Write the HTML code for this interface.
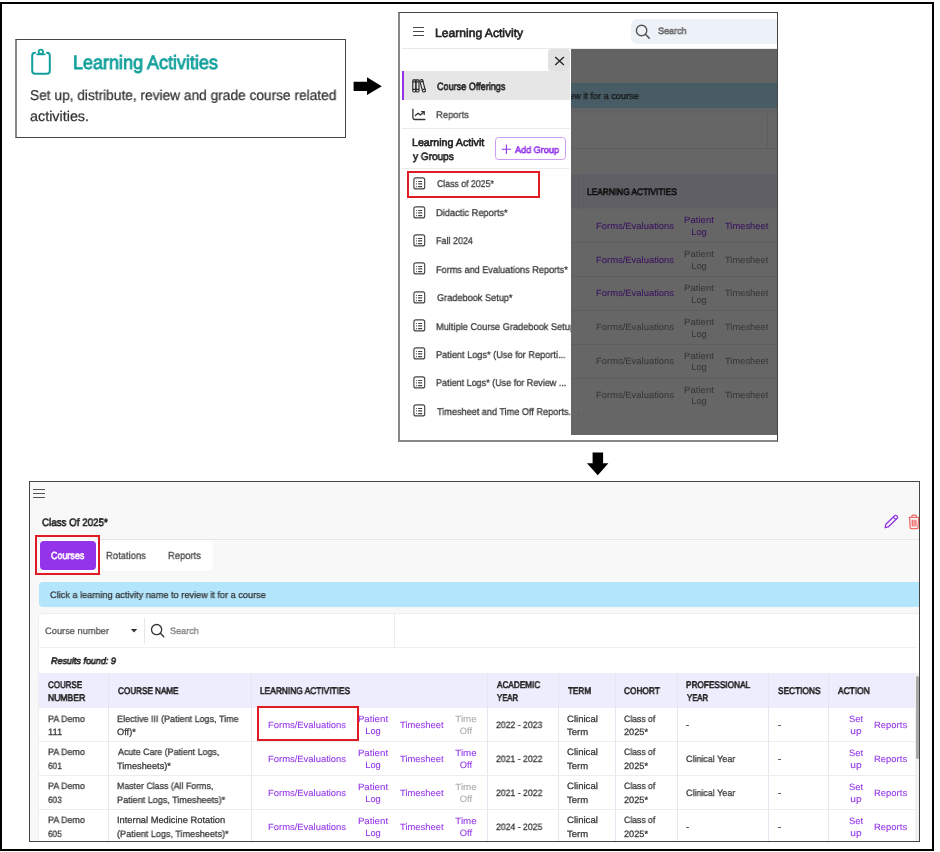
<!DOCTYPE html>
<html><head><meta charset="utf-8"><style>
html,body{margin:0;padding:0;background:#fff;}
body{width:940px;height:852px;position:relative;overflow:hidden;font-family:"Liberation Sans", sans-serif;text-rendering:geometricPrecision;}
.a{position:absolute;}
.t{position:absolute;white-space:nowrap;display:inline-block;-webkit-text-stroke:0.25px currentColor;}
.b{-webkit-text-stroke:0;}
.t{will-change:transform;}
svg.a{overflow:visible;}
</style></head><body>
<div class="a" style="left:0px;top:2px;width:934px;height:849px;border:2px solid #000;box-sizing:border-box;"></div><div class="a" style="left:15px;top:39px;width:331px;height:99px;border:1px solid #454545;border-left:2px solid #878787;box-sizing:border-box;"></div><svg class="a" style="left:30px;top:47px" width="22" height="28" viewBox="0 0 22 28">
<path d="M5 5.8 C3 5.8 2.2 7 2.2 8.8 V23.8 C2.2 25.8 3.2 26.8 5.2 26.8 H16.8 C18.8 26.8 19.8 25.8 19.8 23.8 V8.8 C19.8 7 19 5.8 17 5.8" fill="none" stroke="#11a09c" stroke-width="2" stroke-linecap="round"/>
<circle cx="10.8" cy="4.8" r="2.2" fill="none" stroke="#11a09c" stroke-width="1.8"/>
<rect x="6.2" y="6.4" width="9.4" height="1.8" rx="0.9" fill="#11a09c"/>
</svg><span id="t0" class="t" style="left:72.64px;top:52.00px;font-size:19.4px;line-height:23px;color:#11a09c;-webkit-text-stroke:0.78px currentColor;transform:scaleX(0.9275);transform-origin:0 0;">Learning Activities</span><span id="t1" class="t" style="left:29.90px;top:88.00px;font-size:14.2px;line-height:17px;color:#333;transform:scaleX(0.9662);transform-origin:0 0;">Set up, distribute, review and grade course related</span><span id="t2" class="t" style="left:30.47px;top:109.00px;font-size:14.2px;line-height:17px;color:#333;transform:scaleX(1.0118);transform-origin:0 0;">activities.</span><svg class="a" style="left:353px;top:76px" width="30" height="20" viewBox="0 0 30 20"><path d="M0.6 5.7 H14 V1.3 L28.8 10.3 L14 19 V15.1 H0.6 Z" fill="#000"/></svg><svg class="a" style="left:586px;top:451px" width="24" height="26" viewBox="0 0 24 26"><path d="M6.6 1.6 H17.1 V12.3 H22.4 L11.8 24.3 L0.9 12.3 H6.6 Z" fill="#000"/></svg><div class="a" style="left:398px;top:12px;width:380px;height:430px;border:1px solid #454545;border-left:2px solid #878787;border-bottom:2px solid #878787;box-sizing:border-box;background:#fff;"></div><div class="a" style="left:402px;top:48px;width:375px;height:1px;background:#e9e9e9;"></div><div class="a" style="left:413px;top:26.650000000000002px;width:11px;height:1.2999999999999972px;background:#4a4a4a;"></div><div class="a" style="left:413px;top:30.650000000000002px;width:11px;height:1.2999999999999972px;background:#4a4a4a;"></div><div class="a" style="left:413px;top:34.550000000000004px;width:11px;height:1.2999999999999972px;background:#4a4a4a;"></div><span id="t3" class="t" style="left:435.31px;top:26.00px;font-size:12.0px;line-height:14px;color:#222;-webkit-text-stroke:0.60px currentColor;transform:scaleX(1.0090);transform-origin:0 0;">Learning Activity</span><div class="a" style="left:631px;top:19px;width:146px;height:25px;background:#edf1f8;border-radius:6px 0 0 6px;"></div><svg class="a" style="left:634px;top:23px" width="18" height="18" viewBox="0 0 18 18"><circle cx="7.6" cy="7.5" r="5.2" fill="none" stroke="#555" stroke-width="1.4"/><path d="M11.4 11.3 L15.2 15.1" stroke="#555" stroke-width="1.5" stroke-linecap="round"/></svg><span id="t4" class="t" style="left:657.73px;top:26.00px;font-size:9.3px;line-height:11px;color:#6b6b6b;-webkit-text-stroke:0.60px currentColor;transform:scaleX(0.9712);transform-origin:0 0;">Search</span><div class="a" style="left:0;top:0;width:940px;height:852px;clip-path:inset(49px 163px 417px 571px);"><div class="a" style="left:571px;top:49px;width:206px;height:386px;background:#f8f8f8;"></div><div class="a" style="left:571px;top:83px;width:206px;height:25px;background:#b3e5fc;"></div><span id="t5" class="t" style="left:422.63px;top:91.00px;font-size:9.3px;line-height:11px;color:#333;transform:scaleX(0.9847);transform-origin:0 0;">Click a learning activity name to review it for a course</span><div class="a" style="left:420px;top:113px;width:357px;height:36px;background:#fff;border-bottom:1px solid #ececec;box-sizing:border-box;"></div><div class="a" style="left:767px;top:114px;width:1px;height:34px;background:#ececec;"></div><div class="a" style="left:420px;top:149px;width:357px;height:25px;background:#fff;"></div><div class="a" style="left:420px;top:174px;width:357px;height:34px;background:#ededfd;"></div><div class="a" style="left:578px;top:174px;width:1px;height:244px;background:#e4e4ef;"></div><span id="t6" class="t" style="left:587.37px;top:186.00px;font-size:9.4px;line-height:11px;color:#222;-webkit-text-stroke:0.60px currentColor;transform:scaleX(0.8893);transform-origin:0 0;">LEARNING ACTIVITIES</span><div class="a" style="left:420px;top:209.1px;width:357px;height:33.95000000000002px;background:#fff;border-bottom:1px solid #ececec;box-sizing:border-box;"></div><span id="t7" class="t" style="left:595.54px;top:221.00px;font-size:9.2px;line-height:11px;color:#9333ea;-webkit-text-stroke:0.08px currentColor;transform:scaleX(1.0259);transform-origin:0 0;">Forms/Evaluations</span><span id="t8" class="t" style="left:699.20px;top:215.00px;font-size:9.2px;line-height:11px;color:#9333ea;-webkit-text-stroke:0.08px currentColor;transform:translateX(-50%) scaleX(1.0457);transform-origin:center;">Patient</span><span id="t9" class="t" style="left:699.20px;top:227.00px;font-size:9.2px;line-height:11px;color:#9333ea;-webkit-text-stroke:0.08px currentColor;transform:translateX(-50%) scaleX(1.0154);transform-origin:center;">Log</span><span id="t10" class="t" style="left:725.24px;top:221.00px;font-size:9.2px;line-height:11px;color:#9333ea;-webkit-text-stroke:0.08px currentColor;transform:scaleX(1.0180);transform-origin:0 0;">Timesheet</span><div class="a" style="left:420px;top:243.04999999999998px;width:357px;height:33.95000000000002px;background:#fff;border-bottom:1px solid #ececec;box-sizing:border-box;"></div><span id="t11" class="t" style="left:595.54px;top:255.00px;font-size:9.2px;line-height:11px;color:#9333ea;-webkit-text-stroke:0.08px currentColor;transform:scaleX(1.0259);transform-origin:0 0;">Forms/Evaluations</span><span id="t12" class="t" style="left:699.20px;top:249.00px;font-size:9.2px;line-height:11px;color:#8c8c8c;-webkit-text-stroke:0.08px currentColor;transform:translateX(-50%) scaleX(1.0457);transform-origin:center;">Patient</span><span id="t13" class="t" style="left:699.20px;top:261.00px;font-size:9.2px;line-height:11px;color:#8c8c8c;-webkit-text-stroke:0.08px currentColor;transform:translateX(-50%) scaleX(1.0154);transform-origin:center;">Log</span><span id="t14" class="t" style="left:725.24px;top:255.00px;font-size:9.2px;line-height:11px;color:#8c8c8c;-webkit-text-stroke:0.08px currentColor;transform:scaleX(1.0180);transform-origin:0 0;">Timesheet</span><div class="a" style="left:420px;top:277.0px;width:357px;height:33.94999999999999px;background:#fff;border-bottom:1px solid #ececec;box-sizing:border-box;"></div><span id="t15" class="t" style="left:595.54px;top:288.00px;font-size:9.2px;line-height:11px;color:#9333ea;-webkit-text-stroke:0.08px currentColor;transform:scaleX(1.0259);transform-origin:0 0;">Forms/Evaluations</span><span id="t16" class="t" style="left:699.20px;top:283.00px;font-size:9.2px;line-height:11px;color:#8c8c8c;-webkit-text-stroke:0.08px currentColor;transform:translateX(-50%) scaleX(1.0457);transform-origin:center;">Patient</span><span id="t17" class="t" style="left:699.20px;top:295.00px;font-size:9.2px;line-height:11px;color:#8c8c8c;-webkit-text-stroke:0.08px currentColor;transform:translateX(-50%) scaleX(1.0154);transform-origin:center;">Log</span><span id="t18" class="t" style="left:725.24px;top:288.00px;font-size:9.2px;line-height:11px;color:#8c8c8c;-webkit-text-stroke:0.08px currentColor;transform:scaleX(1.0180);transform-origin:0 0;">Timesheet</span><div class="a" style="left:420px;top:310.95000000000005px;width:357px;height:33.94999999999999px;background:#fff;border-bottom:1px solid #ececec;box-sizing:border-box;"></div><span id="t19" class="t" style="left:595.54px;top:322.00px;font-size:9.2px;line-height:11px;color:#8c8c8c;-webkit-text-stroke:0.08px currentColor;transform:scaleX(1.0259);transform-origin:0 0;">Forms/Evaluations</span><span id="t20" class="t" style="left:699.20px;top:317.00px;font-size:9.2px;line-height:11px;color:#8c8c8c;-webkit-text-stroke:0.08px currentColor;transform:translateX(-50%) scaleX(1.0457);transform-origin:center;">Patient</span><span id="t21" class="t" style="left:699.20px;top:329.00px;font-size:9.2px;line-height:11px;color:#8c8c8c;-webkit-text-stroke:0.08px currentColor;transform:translateX(-50%) scaleX(1.0154);transform-origin:center;">Log</span><span id="t22" class="t" style="left:725.24px;top:322.00px;font-size:9.2px;line-height:11px;color:#8c8c8c;-webkit-text-stroke:0.08px currentColor;transform:scaleX(1.0180);transform-origin:0 0;">Timesheet</span><div class="a" style="left:420px;top:344.90000000000003px;width:357px;height:33.94999999999999px;background:#fff;border-bottom:1px solid #ececec;box-sizing:border-box;"></div><span id="t23" class="t" style="left:595.54px;top:356.00px;font-size:9.2px;line-height:11px;color:#8c8c8c;-webkit-text-stroke:0.08px currentColor;transform:scaleX(1.0259);transform-origin:0 0;">Forms/Evaluations</span><span id="t24" class="t" style="left:699.20px;top:351.00px;font-size:9.2px;line-height:11px;color:#8c8c8c;-webkit-text-stroke:0.08px currentColor;transform:translateX(-50%) scaleX(1.0457);transform-origin:center;">Patient</span><span id="t25" class="t" style="left:699.20px;top:362.00px;font-size:9.2px;line-height:11px;color:#8c8c8c;-webkit-text-stroke:0.08px currentColor;transform:translateX(-50%) scaleX(1.0154);transform-origin:center;">Log</span><span id="t26" class="t" style="left:725.24px;top:356.00px;font-size:9.2px;line-height:11px;color:#8c8c8c;-webkit-text-stroke:0.08px currentColor;transform:scaleX(1.0180);transform-origin:0 0;">Timesheet</span><div class="a" style="left:420px;top:378.85px;width:357px;height:33.94999999999999px;background:#fff;border-bottom:1px solid #ececec;box-sizing:border-box;"></div><span id="t27" class="t" style="left:595.54px;top:390.00px;font-size:9.2px;line-height:11px;color:#8c8c8c;-webkit-text-stroke:0.08px currentColor;transform:scaleX(1.0259);transform-origin:0 0;">Forms/Evaluations</span><span id="t28" class="t" style="left:699.20px;top:385.00px;font-size:9.2px;line-height:11px;color:#8c8c8c;-webkit-text-stroke:0.08px currentColor;transform:translateX(-50%) scaleX(1.0457);transform-origin:center;">Patient</span><span id="t29" class="t" style="left:699.20px;top:396.00px;font-size:9.2px;line-height:11px;color:#8c8c8c;-webkit-text-stroke:0.08px currentColor;transform:translateX(-50%) scaleX(1.0154);transform-origin:center;">Log</span><span id="t30" class="t" style="left:725.24px;top:390.00px;font-size:9.2px;line-height:11px;color:#8c8c8c;-webkit-text-stroke:0.08px currentColor;transform:scaleX(1.0180);transform-origin:0 0;">Timesheet</span><div class="a" style="left:420px;top:412px;width:357px;height:23px;background:#fff;"></div><div class="a" style="left:578px;top:412px;width:1px;height:6px;background:#e4e4ef;"></div><div class="a" style="left:571px;top:49px;width:206px;height:386px;background:rgba(0,0,0,0.6);"></div></div><div class="a" style="left:0;top:0;width:940px;height:852px;clip-path:inset(13px 369px 412px 400px);"><div class="a" style="left:548px;top:48.5px;width:22px;height:22.5px;background:#e2e2e2;border-radius:3px;"></div><svg class="a" style="left:553px;top:55px" width="13" height="13" viewBox="0 0 13 13"><path d="M2.2 2 L10.9 10.1 M10.9 2 L2.2 10.1" stroke="#222" stroke-width="1.3"/></svg><div class="a" style="left:402px;top:71px;width:168px;height:28.700000000000003px;background:#e6e6e6;"></div><div class="a" style="left:402px;top:71px;width:2.1999999999999886px;height:28.700000000000003px;background:#9333ea;"></div><svg class="a" style="left:410px;top:77px" width="18" height="18" viewBox="0 0 18 18" fill="none" stroke="#2a2a2a" stroke-width="1.15">
<rect x="2.8" y="2.8" width="3.1" height="12.2" rx="0.9"/>
<rect x="5.9" y="2.8" width="3.1" height="12.2" rx="0.9"/>
<path d="M2.8 4.9 H9.0 M2.8 12.4 H9.0"/>
<rect x="11.2" y="2.6" width="2.9" height="12.4" rx="0.9" transform="rotate(-15 12.65 8.8)"/>
<path d="M10.6 4.9 L13.6 4.1 M12.6 12.6 L15.4 11.8"/>
</svg><span id="t31" class="t" style="left:436.79px;top:81.00px;font-size:10.5px;line-height:13px;color:#222;-webkit-text-stroke:0.60px currentColor;transform:scaleX(0.8633);transform-origin:0 0;">Course Offerings</span><svg class="a" style="left:410px;top:106px" width="18" height="18" viewBox="0 0 18 18" fill="none" stroke="#333" stroke-width="1.3" stroke-linecap="round" stroke-linejoin="round">
<path d="M2.9 3.1 V11.8 Q2.9 13.5 4.6 13.5 H14.9"/>
<path d="M5.3 9.5 L8.1 7.2 L10.4 9 L14 6"/>
<path d="M11.6 5.7 H14.2 V8.4"/>
</svg><span id="t32" class="t" style="left:436.44px;top:110.00px;font-size:9.7px;line-height:12px;color:#444;transform:scaleX(0.9687);transform-origin:0 0;">Reports</span><div class="a" style="left:402px;top:128px;width:168px;height:1px;background:#ebebeb;"></div><span id="t33" class="t" style="left:412.18px;top:137.00px;font-size:10.6px;line-height:13px;color:#222;-webkit-text-stroke:0.60px currentColor;transform:scaleX(1.0050);transform-origin:0 0;">Learning Activit</span><span id="t34" class="t" style="left:412.90px;top:151.00px;font-size:10.6px;line-height:13px;color:#222;-webkit-text-stroke:0.60px currentColor;transform:scaleX(0.9477);transform-origin:0 0;">y Groups</span><div class="a" style="left:494.5px;top:137.2px;width:71.20000000000005px;height:23.100000000000023px;border:1px solid #c99cf7;border-radius:3.5px;box-sizing:border-box;"></div><svg class="a" style="left:500px;top:143px" width="13" height="13" viewBox="0 0 13 13"><path d="M6.4 1.5 V10.9 M1.7 6.2 H11" stroke="#9333ea" stroke-width="1.1"/></svg><span id="t35" class="t" style="left:515.23px;top:144.00px;font-size:9.4px;line-height:11px;color:#9333ea;-webkit-text-stroke:0.60px currentColor;transform:scaleX(0.9677);transform-origin:0 0;">Add Group</span><div class="a" style="left:402px;top:168px;width:168px;height:1px;background:#ebebeb;"></div><svg class="a" style="left:411px;top:175.60px" width="16" height="15" viewBox="0 0 16 15" fill="none" stroke="#444" stroke-width="1.15">
<rect x="2.9" y="1.9" width="10.8" height="11" rx="2"/>
<path d="M5.1 5.5 H5.9 M5.1 7.9 H5.9 M5.1 10.6 H5.9" stroke-width="1.2"/>
<path d="M7.1 5.5 H11.2 M7.1 7.9 H11.2 M7.1 10.6 H11.2" stroke-width="1.1"/>
</svg><span id="t36" class="t" style="left:436.68px;top:179.00px;font-size:9.8px;line-height:12px;color:#333;transform:scaleX(0.8908);transform-origin:0 0;">Class of 2025*</span><svg class="a" style="left:411px;top:204.80px" width="16" height="15" viewBox="0 0 16 15" fill="none" stroke="#444" stroke-width="1.15">
<rect x="2.9" y="1.9" width="10.8" height="11" rx="2"/>
<path d="M5.1 5.5 H5.9 M5.1 7.9 H5.9 M5.1 10.6 H5.9" stroke-width="1.2"/>
<path d="M7.1 5.5 H11.2 M7.1 7.9 H11.2 M7.1 10.6 H11.2" stroke-width="1.1"/>
</svg><span id="t37" class="t" style="left:436.45px;top:208.00px;font-size:9.8px;line-height:12px;color:#333;transform:scaleX(0.9481);transform-origin:0 0;">Didactic Reports*</span><svg class="a" style="left:411px;top:232.90px" width="16" height="15" viewBox="0 0 16 15" fill="none" stroke="#444" stroke-width="1.15">
<rect x="2.9" y="1.9" width="10.8" height="11" rx="2"/>
<path d="M5.1 5.5 H5.9 M5.1 7.9 H5.9 M5.1 10.6 H5.9" stroke-width="1.2"/>
<path d="M7.1 5.5 H11.2 M7.1 7.9 H11.2 M7.1 10.6 H11.2" stroke-width="1.1"/>
</svg><span id="t38" class="t" style="left:436.48px;top:236.00px;font-size:9.8px;line-height:12px;color:#333;transform:scaleX(0.9153);transform-origin:0 0;">Fall 2024</span><svg class="a" style="left:411px;top:261.20px" width="16" height="15" viewBox="0 0 16 15" fill="none" stroke="#444" stroke-width="1.15">
<rect x="2.9" y="1.9" width="10.8" height="11" rx="2"/>
<path d="M5.1 5.5 H5.9 M5.1 7.9 H5.9 M5.1 10.6 H5.9" stroke-width="1.2"/>
<path d="M7.1 5.5 H11.2 M7.1 7.9 H11.2 M7.1 10.6 H11.2" stroke-width="1.1"/>
</svg><span id="t39" class="t" style="left:436.46px;top:265.00px;font-size:9.8px;line-height:12px;color:#333;transform:scaleX(0.9345);transform-origin:0 0;">Forms and Evaluations Reports*</span><svg class="a" style="left:411px;top:289.90px" width="16" height="15" viewBox="0 0 16 15" fill="none" stroke="#444" stroke-width="1.15">
<rect x="2.9" y="1.9" width="10.8" height="11" rx="2"/>
<path d="M5.1 5.5 H5.9 M5.1 7.9 H5.9 M5.1 10.6 H5.9" stroke-width="1.2"/>
<path d="M7.1 5.5 H11.2 M7.1 7.9 H11.2 M7.1 10.6 H11.2" stroke-width="1.1"/>
</svg><span id="t40" class="t" style="left:436.64px;top:293.00px;font-size:9.8px;line-height:12px;color:#333;transform:scaleX(0.9365);transform-origin:0 0;">Gradebook Setup*</span><svg class="a" style="left:411px;top:318.10px" width="16" height="15" viewBox="0 0 16 15" fill="none" stroke="#444" stroke-width="1.15">
<rect x="2.9" y="1.9" width="10.8" height="11" rx="2"/>
<path d="M5.1 5.5 H5.9 M5.1 7.9 H5.9 M5.1 10.6 H5.9" stroke-width="1.2"/>
<path d="M7.1 5.5 H11.2 M7.1 7.9 H11.2 M7.1 10.6 H11.2" stroke-width="1.1"/>
</svg><span id="t41" class="t" style="left:436.45px;top:322.00px;font-size:9.8px;line-height:12px;color:#333;transform:scaleX(0.9422);transform-origin:0 0;">Multiple Course Gradebook Setup*</span><svg class="a" style="left:411px;top:346.40px" width="16" height="15" viewBox="0 0 16 15" fill="none" stroke="#444" stroke-width="1.15">
<rect x="2.9" y="1.9" width="10.8" height="11" rx="2"/>
<path d="M5.1 5.5 H5.9 M5.1 7.9 H5.9 M5.1 10.6 H5.9" stroke-width="1.2"/>
<path d="M7.1 5.5 H11.2 M7.1 7.9 H11.2 M7.1 10.6 H11.2" stroke-width="1.1"/>
</svg><span id="t42" class="t" style="left:436.46px;top:350.00px;font-size:9.8px;line-height:12px;color:#333;transform:scaleX(0.9369);transform-origin:0 0;">Patient Logs* (Use for Reporti...</span><svg class="a" style="left:411px;top:374.70px" width="16" height="15" viewBox="0 0 16 15" fill="none" stroke="#444" stroke-width="1.15">
<rect x="2.9" y="1.9" width="10.8" height="11" rx="2"/>
<path d="M5.1 5.5 H5.9 M5.1 7.9 H5.9 M5.1 10.6 H5.9" stroke-width="1.2"/>
<path d="M7.1 5.5 H11.2 M7.1 7.9 H11.2 M7.1 10.6 H11.2" stroke-width="1.1"/>
</svg><span id="t43" class="t" style="left:436.46px;top:378.00px;font-size:9.8px;line-height:12px;color:#333;transform:scaleX(0.9207);transform-origin:0 0;">Patient Logs* (Use for Review ...</span><svg class="a" style="left:411px;top:403.20px" width="16" height="15" viewBox="0 0 16 15" fill="none" stroke="#444" stroke-width="1.15">
<rect x="2.9" y="1.9" width="10.8" height="11" rx="2"/>
<path d="M5.1 5.5 H5.9 M5.1 7.9 H5.9 M5.1 10.6 H5.9" stroke-width="1.2"/>
<path d="M7.1 5.5 H11.2 M7.1 7.9 H11.2 M7.1 10.6 H11.2" stroke-width="1.1"/>
</svg><span id="t44" class="t" style="left:436.78px;top:407.00px;font-size:9.8px;line-height:12px;color:#333;transform:scaleX(0.9319);transform-origin:0 0;">Timesheet and Time Off Reports...</span></div><div class="a" style="left:406.5px;top:171px;width:133.5px;height:27px;border:2px solid #e01b24;box-sizing:border-box;"></div><div class="a" style="left:29px;top:481px;width:891px;height:361px;border:1px solid #454545;box-sizing:border-box;background:#f8f8f8;"></div><div class="a" style="left:0;top:0;width:940px;height:852px;clip-path:inset(482px 21px 11px 30px);"><div class="a" style="left:33.2px;top:488.9px;width:11.399999999999999px;height:1.2000000000000455px;background:#555;"></div><div class="a" style="left:33.2px;top:492.9px;width:11.399999999999999px;height:1.2000000000000455px;background:#555;"></div><div class="a" style="left:33.2px;top:496.9px;width:11.399999999999999px;height:1.2000000000000455px;background:#555;"></div><span id="t45" class="t" style="left:41.78px;top:517.00px;font-size:10.8px;line-height:13px;color:#222;-webkit-text-stroke:0.60px currentColor;transform:scaleX(0.9044);transform-origin:0 0;">Class Of 2025*</span><svg class="a" style="left:882px;top:513px" width="18" height="18" viewBox="0 0 18 18" fill="none" stroke="#9333ea" stroke-width="1.3" stroke-linejoin="round">
<path d="M3.1 14.6 L3.9 11.3 L12.6 2.8 Q13.6 1.9 14.6 2.8 L15.2 3.4 Q16.1 4.4 15.2 5.3 L6.5 13.8 Z"/>
<path d="M11.3 4.1 L13.9 6.6"/>
</svg><svg class="a" style="left:906px;top:513px" width="16" height="18" viewBox="0 0 16 18" fill="none" stroke="#f26b6b" stroke-width="1.3" stroke-linejoin="round">
<path d="M2.6 4.4 H13.6 M5.9 4.4 V3.1 Q5.9 2.2 6.8 2.2 H9.4 Q10.3 2.2 10.3 3.1 V4.4"/>
<path d="M3.6 4.6 L4.2 14.6 Q4.3 15.6 5.3 15.6 H11 Q12 15.6 12.1 14.6 L12.7 4.6"/>
<path d="M6.3 6.8 V13.4 M8.1 6.8 V13.4 M9.9 6.8 V13.4"/>
</svg><div class="a" style="left:100px;top:539px;width:820px;height:1px;background:#e6e6e6;"></div><div class="a" style="left:38px;top:539.5px;width:175px;height:31.5px;background:#fff;border-radius:5px;"></div><div class="a" style="left:40.2px;top:541px;width:55.39999999999999px;height:28.5px;background:#9333ea;border-radius:4px;"></div><span id="t46" class="t" style="left:51.10px;top:551.00px;font-size:10.3px;line-height:12px;color:#fff;-webkit-text-stroke:0.60px currentColor;transform:scaleX(0.8674);transform-origin:0 0;">Courses</span><span id="t47" class="t" style="left:106.44px;top:551.00px;font-size:10.3px;line-height:12px;color:#444;transform:scaleX(0.9177);transform-origin:0 0;">Rotations</span><span id="t48" class="t" style="left:168.14px;top:551.00px;font-size:10.3px;line-height:12px;color:#444;transform:scaleX(0.9094);transform-origin:0 0;">Reports</span><div class="a" style="left:35.3px;top:535.3px;width:64.5px;height:39.5px;border:2px solid #e01b24;box-sizing:border-box;"></div><div class="a" style="left:38.6px;top:582.2px;width:881.4px;height:24.799999999999955px;background:#b3e5fc;border-radius:4px 0 0 4px;"></div><span id="t49" class="t" style="left:50.03px;top:590.00px;font-size:9.3px;line-height:11px;color:#333;transform:scaleX(0.9847);transform-origin:0 0;">Click a learning activity name to review it for a course</span><div class="a" style="left:38.3px;top:613px;width:880.7px;height:229px;background:#fff;border:1px solid #eeeeee;border-bottom:0;border-right:0;border-radius:5px 0 0 0;box-sizing:border-box;"></div><span id="t50" class="t" style="left:44.85px;top:626.00px;font-size:9.3px;line-height:11px;color:#555;transform:scaleX(0.9971);transform-origin:0 0;">Course number</span><svg class="a" style="left:129px;top:627px" width="10" height="8" viewBox="0 0 10 8"><path d="M1.9 1.9 H8.2 L5.05 5.4 Z" fill="#333"/></svg><div class="a" style="left:143.6px;top:618.4px;width:1.0px;height:25.300000000000068px;background:#e6e6e6;"></div><svg class="a" style="left:149px;top:622px" width="18" height="18" viewBox="0 0 18 18"><circle cx="7.6" cy="7.6" r="5.1" fill="none" stroke="#333" stroke-width="1.3"/><path d="M11.3 11.3 L14.8 14.8" stroke="#333" stroke-width="1.4" stroke-linecap="round"/></svg><span id="t51" class="t" style="left:169.82px;top:626.00px;font-size:9.3px;line-height:11px;color:#777;transform:scaleX(0.9767);transform-origin:0 0;">Search</span><div class="a" style="left:393.9px;top:613.5px;width:1.0px;height:33.5px;background:#ececec;"></div><div class="a" style="left:38.8px;top:647px;width:878.2px;height:1px;background:#efefef;"></div><span id="t52" class="t" style="left:51.09px;top:656.00px;font-size:9.3px;line-height:11px;color:#222;-webkit-text-stroke:0.60px currentColor;font-style:italic;transform:scaleX(0.9655);transform-origin:0 0;">Results found: 9</span><div class="a" style="left:38.8px;top:673.3px;width:875.9000000000001px;height:34.5px;background:#ededfd;"></div><div class="a" style="left:107.9px;top:673.3px;width:1.0px;height:167.70000000000005px;background:#e6e6f0;"></div><div class="a" style="left:251.0px;top:673.3px;width:1.0px;height:167.70000000000005px;background:#e6e6f0;"></div><div class="a" style="left:487.2px;top:673.3px;width:1.0px;height:167.70000000000005px;background:#e6e6f0;"></div><div class="a" style="left:557.8px;top:673.3px;width:1.0px;height:167.70000000000005px;background:#e6e6f0;"></div><div class="a" style="left:615.1px;top:673.3px;width:1.0px;height:167.70000000000005px;background:#e6e6f0;"></div><div class="a" style="left:677.2px;top:673.3px;width:1.0px;height:167.70000000000005px;background:#e6e6f0;"></div><div class="a" style="left:768.3px;top:673.3px;width:1.0px;height:167.70000000000005px;background:#e6e6f0;"></div><div class="a" style="left:828.0px;top:673.3px;width:1.0px;height:167.70000000000005px;background:#e6e6f0;"></div><span id="t53" class="t" style="left:47.91px;top:680.00px;font-size:9.6px;line-height:12px;color:#222;-webkit-text-stroke:0.60px currentColor;transform:scaleX(0.8301);transform-origin:0 0;">COURSE</span><span id="t54" class="t" style="left:47.75px;top:693.00px;font-size:9.6px;line-height:12px;color:#222;-webkit-text-stroke:0.60px currentColor;transform:scaleX(0.8949);transform-origin:0 0;">NUMBER</span><span id="t55" class="t" style="left:117.51px;top:686.00px;font-size:9.6px;line-height:12px;color:#222;-webkit-text-stroke:0.60px currentColor;transform:scaleX(0.8472);transform-origin:0 0;">COURSE NAME</span><span id="t56" class="t" style="left:259.76px;top:686.00px;font-size:9.6px;line-height:12px;color:#222;-webkit-text-stroke:0.60px currentColor;transform:scaleX(0.8717);transform-origin:0 0;">LEARNING ACTIVITIES</span><span id="t57" class="t" style="left:496.91px;top:680.00px;font-size:9.6px;line-height:12px;color:#222;-webkit-text-stroke:0.60px currentColor;transform:scaleX(0.8530);transform-origin:0 0;">ACADEMIC</span><span id="t58" class="t" style="left:496.88px;top:693.00px;font-size:9.6px;line-height:12px;color:#222;-webkit-text-stroke:0.60px currentColor;transform:scaleX(0.8059);transform-origin:0 0;">YEAR</span><span id="t59" class="t" style="left:567.70px;top:686.00px;font-size:9.6px;line-height:12px;color:#222;-webkit-text-stroke:0.60px currentColor;transform:scaleX(0.8474);transform-origin:0 0;">TERM</span><span id="t60" class="t" style="left:624.31px;top:686.00px;font-size:9.6px;line-height:12px;color:#222;-webkit-text-stroke:0.60px currentColor;transform:scaleX(0.8655);transform-origin:0 0;">COHORT</span><span id="t61" class="t" style="left:686.47px;top:680.00px;font-size:9.6px;line-height:12px;color:#222;-webkit-text-stroke:0.60px currentColor;transform:scaleX(0.8592);transform-origin:0 0;">PROFESSIONAL</span><span id="t62" class="t" style="left:686.88px;top:693.00px;font-size:9.6px;line-height:12px;color:#222;-webkit-text-stroke:0.60px currentColor;transform:scaleX(0.8059);transform-origin:0 0;">YEAR</span><span id="t63" class="t" style="left:777.65px;top:686.00px;font-size:9.6px;line-height:12px;color:#222;-webkit-text-stroke:0.60px currentColor;transform:scaleX(0.8669);transform-origin:0 0;">SECTIONS</span><span id="t64" class="t" style="left:838.02px;top:686.00px;font-size:9.6px;line-height:12px;color:#222;-webkit-text-stroke:0.60px currentColor;transform:scaleX(0.8777);transform-origin:0 0;">ACTION</span><div class="a" style="left:38.8px;top:741.1999999999999px;width:875.9000000000001px;height:1.0px;background:#ececec;"></div><span id="t65" class="t" style="left:47.61px;top:714.00px;font-size:9.2px;line-height:11px;color:#333;transform:scaleX(0.9669);transform-origin:0 0;">PA Demo</span><span id="t66" class="t" style="left:47.71px;top:727.00px;font-size:9.2px;line-height:11px;color:#333;transform:scaleX(1.0212);transform-origin:0 0;">111</span><span id="t67" class="t" style="left:117.17px;top:714.00px;font-size:9.2px;line-height:11px;color:#333;transform:scaleX(0.9801);transform-origin:0 0;">Elective III (Patient Logs, Time</span><span id="t68" class="t" style="left:117.17px;top:727.00px;font-size:9.2px;line-height:11px;color:#333;transform:scaleX(1.0074);transform-origin:0 0;">Off)*</span><span id="t69" class="t" style="left:267.94px;top:720.00px;font-size:9.2px;line-height:11px;color:#9333ea;-webkit-text-stroke:0.08px currentColor;transform:scaleX(1.0259);transform-origin:0 0;">Forms/Evaluations</span><span id="t70" class="t" style="left:373.10px;top:714.00px;font-size:9.2px;line-height:11px;color:#9333ea;-webkit-text-stroke:0.08px currentColor;transform:translateX(-50%) scaleX(1.0565);transform-origin:center;">Patient</span><span id="t71" class="t" style="left:373.10px;top:726.00px;font-size:9.2px;line-height:11px;color:#9333ea;-webkit-text-stroke:0.08px currentColor;transform:translateX(-50%) scaleX(1.0154);transform-origin:center;">Log</span><span id="t72" class="t" style="left:399.94px;top:720.00px;font-size:9.2px;line-height:11px;color:#9333ea;-webkit-text-stroke:0.08px currentColor;transform:scaleX(1.0251);transform-origin:0 0;">Timesheet</span><span id="t73" class="t" style="left:465.60px;top:714.00px;font-size:9.2px;line-height:11px;color:#a8a8a8;-webkit-text-stroke:0.08px currentColor;transform:translateX(-50%) scaleX(1.0619);transform-origin:center;">Time</span><span id="t74" class="t" style="left:465.60px;top:726.00px;font-size:9.2px;line-height:11px;color:#a8a8a8;-webkit-text-stroke:0.08px currentColor;transform:translateX(-50%) scaleX(1.0176);transform-origin:center;">Off</span><span id="t75" class="t" style="left:496.44px;top:720.00px;font-size:9.2px;line-height:11px;color:#333;transform:scaleX(0.9449);transform-origin:0 0;">2022 - 2023</span><span id="t76" class="t" style="left:567.05px;top:714.00px;font-size:9.2px;line-height:11px;color:#333;transform:scaleX(1.0409);transform-origin:0 0;">Clinical</span><span id="t77" class="t" style="left:567.03px;top:727.00px;font-size:9.2px;line-height:11px;color:#333;transform:scaleX(1.0355);transform-origin:0 0;">Term</span><span id="t78" class="t" style="left:624.09px;top:714.00px;font-size:9.2px;line-height:11px;color:#333;transform:scaleX(0.9396);transform-origin:0 0;">Class of</span><span id="t79" class="t" style="left:624.03px;top:727.00px;font-size:9.2px;line-height:11px;color:#333;transform:scaleX(0.9995);transform-origin:0 0;">2025*</span><span id="t80" class="t" style="left:686.31px;top:720.00px;font-size:9.2px;line-height:11px;color:#333;">-</span><span id="t81" class="t" style="left:778.01px;top:720.00px;font-size:9.2px;line-height:11px;color:#333;">-</span><span id="t82" class="t" style="left:855.90px;top:714.00px;font-size:9.2px;line-height:11px;color:#9333ea;-webkit-text-stroke:0.08px currentColor;transform:translateX(-50%) scaleX(1.0321);transform-origin:center;">Set</span><span id="t83" class="t" style="left:855.90px;top:726.00px;font-size:9.2px;line-height:11px;color:#9333ea;-webkit-text-stroke:0.08px currentColor;transform:translateX(-50%) scaleX(1.1130);transform-origin:center;">up</span><span id="t84" class="t" style="left:873.54px;top:720.00px;font-size:9.2px;line-height:11px;color:#9333ea;-webkit-text-stroke:0.08px currentColor;transform:scaleX(1.0297);transform-origin:0 0;">Reports</span><div class="a" style="left:38.8px;top:775.0999999999999px;width:875.9000000000001px;height:1.0px;background:#ececec;"></div><span id="t85" class="t" style="left:47.61px;top:747.00px;font-size:9.2px;line-height:11px;color:#333;transform:scaleX(0.9669);transform-origin:0 0;">PA Demo</span><span id="t86" class="t" style="left:48.01px;top:761.00px;font-size:9.2px;line-height:11px;color:#333;transform:scaleX(0.9057);transform-origin:0 0;">601</span><span id="t87" class="t" style="left:117.59px;top:747.00px;font-size:9.2px;line-height:11px;color:#333;transform:scaleX(0.9629);transform-origin:0 0;">Acute Care (Patient Logs,</span><span id="t88" class="t" style="left:117.14px;top:761.00px;font-size:9.2px;line-height:11px;color:#333;transform:scaleX(1.0025);transform-origin:0 0;">Timesheets)*</span><span id="t89" class="t" style="left:267.94px;top:754.00px;font-size:9.2px;line-height:11px;color:#9333ea;-webkit-text-stroke:0.08px currentColor;transform:scaleX(1.0259);transform-origin:0 0;">Forms/Evaluations</span><span id="t90" class="t" style="left:373.10px;top:748.00px;font-size:9.2px;line-height:11px;color:#9333ea;-webkit-text-stroke:0.08px currentColor;transform:translateX(-50%) scaleX(1.0565);transform-origin:center;">Patient</span><span id="t91" class="t" style="left:373.10px;top:760.00px;font-size:9.2px;line-height:11px;color:#9333ea;-webkit-text-stroke:0.08px currentColor;transform:translateX(-50%) scaleX(1.0154);transform-origin:center;">Log</span><span id="t92" class="t" style="left:399.94px;top:754.00px;font-size:9.2px;line-height:11px;color:#9333ea;-webkit-text-stroke:0.08px currentColor;transform:scaleX(1.0251);transform-origin:0 0;">Timesheet</span><span id="t93" class="t" style="left:465.60px;top:748.00px;font-size:9.2px;line-height:11px;color:#9333ea;-webkit-text-stroke:0.08px currentColor;transform:translateX(-50%) scaleX(1.0619);transform-origin:center;">Time</span><span id="t94" class="t" style="left:465.60px;top:760.00px;font-size:9.2px;line-height:11px;color:#9333ea;-webkit-text-stroke:0.08px currentColor;transform:translateX(-50%) scaleX(1.0176);transform-origin:center;">Off</span><span id="t95" class="t" style="left:496.44px;top:754.00px;font-size:9.2px;line-height:11px;color:#333;transform:scaleX(0.9464);transform-origin:0 0;">2021 - 2022</span><span id="t96" class="t" style="left:567.05px;top:747.00px;font-size:9.2px;line-height:11px;color:#333;transform:scaleX(1.0409);transform-origin:0 0;">Clinical</span><span id="t97" class="t" style="left:567.03px;top:761.00px;font-size:9.2px;line-height:11px;color:#333;transform:scaleX(1.0355);transform-origin:0 0;">Term</span><span id="t98" class="t" style="left:624.09px;top:747.00px;font-size:9.2px;line-height:11px;color:#333;transform:scaleX(0.9396);transform-origin:0 0;">Class of</span><span id="t99" class="t" style="left:624.03px;top:761.00px;font-size:9.2px;line-height:11px;color:#333;transform:scaleX(0.9995);transform-origin:0 0;">2025*</span><span id="t100" class="t" style="left:686.17px;top:754.00px;font-size:9.2px;line-height:11px;color:#333;transform:scaleX(0.9723);transform-origin:0 0;">Clinical Year</span><span id="t101" class="t" style="left:778.01px;top:754.00px;font-size:9.2px;line-height:11px;color:#333;">-</span><span id="t102" class="t" style="left:855.90px;top:748.00px;font-size:9.2px;line-height:11px;color:#9333ea;-webkit-text-stroke:0.08px currentColor;transform:translateX(-50%) scaleX(1.0321);transform-origin:center;">Set</span><span id="t103" class="t" style="left:855.90px;top:760.00px;font-size:9.2px;line-height:11px;color:#9333ea;-webkit-text-stroke:0.08px currentColor;transform:translateX(-50%) scaleX(1.1130);transform-origin:center;">up</span><span id="t104" class="t" style="left:873.54px;top:754.00px;font-size:9.2px;line-height:11px;color:#9333ea;-webkit-text-stroke:0.08px currentColor;transform:scaleX(1.0297);transform-origin:0 0;">Reports</span><div class="a" style="left:38.8px;top:808.9999999999999px;width:875.9000000000001px;height:1.0px;background:#ececec;"></div><span id="t105" class="t" style="left:47.61px;top:781.00px;font-size:9.2px;line-height:11px;color:#333;transform:scaleX(0.9669);transform-origin:0 0;">PA Demo</span><span id="t106" class="t" style="left:48.01px;top:795.00px;font-size:9.2px;line-height:11px;color:#333;transform:scaleX(0.8996);transform-origin:0 0;">603</span><span id="t107" class="t" style="left:117.18px;top:781.00px;font-size:9.2px;line-height:11px;color:#333;transform:scaleX(0.9575);transform-origin:0 0;">Master Class (All Forms,</span><span id="t108" class="t" style="left:116.96px;top:795.00px;font-size:9.2px;line-height:11px;color:#333;transform:scaleX(0.9850);transform-origin:0 0;">Patient Logs, Timesheets)*</span><span id="t109" class="t" style="left:267.94px;top:788.00px;font-size:9.2px;line-height:11px;color:#9333ea;-webkit-text-stroke:0.08px currentColor;transform:scaleX(1.0259);transform-origin:0 0;">Forms/Evaluations</span><span id="t110" class="t" style="left:373.10px;top:782.00px;font-size:9.2px;line-height:11px;color:#9333ea;-webkit-text-stroke:0.08px currentColor;transform:translateX(-50%) scaleX(1.0565);transform-origin:center;">Patient</span><span id="t111" class="t" style="left:373.10px;top:794.00px;font-size:9.2px;line-height:11px;color:#9333ea;-webkit-text-stroke:0.08px currentColor;transform:translateX(-50%) scaleX(1.0154);transform-origin:center;">Log</span><span id="t112" class="t" style="left:399.94px;top:788.00px;font-size:9.2px;line-height:11px;color:#9333ea;-webkit-text-stroke:0.08px currentColor;transform:scaleX(1.0251);transform-origin:0 0;">Timesheet</span><span id="t113" class="t" style="left:465.60px;top:782.00px;font-size:9.2px;line-height:11px;color:#a8a8a8;-webkit-text-stroke:0.08px currentColor;transform:translateX(-50%) scaleX(1.0619);transform-origin:center;">Time</span><span id="t114" class="t" style="left:465.60px;top:794.00px;font-size:9.2px;line-height:11px;color:#a8a8a8;-webkit-text-stroke:0.08px currentColor;transform:translateX(-50%) scaleX(1.0176);transform-origin:center;">Off</span><span id="t115" class="t" style="left:496.44px;top:788.00px;font-size:9.2px;line-height:11px;color:#333;transform:scaleX(0.9464);transform-origin:0 0;">2021 - 2022</span><span id="t116" class="t" style="left:567.05px;top:781.00px;font-size:9.2px;line-height:11px;color:#333;transform:scaleX(1.0409);transform-origin:0 0;">Clinical</span><span id="t117" class="t" style="left:567.03px;top:795.00px;font-size:9.2px;line-height:11px;color:#333;transform:scaleX(1.0355);transform-origin:0 0;">Term</span><span id="t118" class="t" style="left:624.09px;top:781.00px;font-size:9.2px;line-height:11px;color:#333;transform:scaleX(0.9396);transform-origin:0 0;">Class of</span><span id="t119" class="t" style="left:624.03px;top:795.00px;font-size:9.2px;line-height:11px;color:#333;transform:scaleX(0.9995);transform-origin:0 0;">2025*</span><span id="t120" class="t" style="left:686.17px;top:788.00px;font-size:9.2px;line-height:11px;color:#333;transform:scaleX(0.9723);transform-origin:0 0;">Clinical Year</span><span id="t121" class="t" style="left:778.01px;top:788.00px;font-size:9.2px;line-height:11px;color:#333;">-</span><span id="t122" class="t" style="left:855.90px;top:782.00px;font-size:9.2px;line-height:11px;color:#9333ea;-webkit-text-stroke:0.08px currentColor;transform:translateX(-50%) scaleX(1.0321);transform-origin:center;">Set</span><span id="t123" class="t" style="left:855.90px;top:794.00px;font-size:9.2px;line-height:11px;color:#9333ea;-webkit-text-stroke:0.08px currentColor;transform:translateX(-50%) scaleX(1.1130);transform-origin:center;">up</span><span id="t124" class="t" style="left:873.54px;top:788.00px;font-size:9.2px;line-height:11px;color:#9333ea;-webkit-text-stroke:0.08px currentColor;transform:scaleX(1.0297);transform-origin:0 0;">Reports</span><div class="a" style="left:38.8px;top:842.9px;width:875.9000000000001px;height:1.0px;background:#ececec;"></div><span id="t125" class="t" style="left:47.61px;top:815.00px;font-size:9.2px;line-height:11px;color:#333;transform:scaleX(0.9669);transform-origin:0 0;">PA Demo</span><span id="t126" class="t" style="left:48.00px;top:829.00px;font-size:9.2px;line-height:11px;color:#333;transform:scaleX(0.9000);transform-origin:0 0;">605</span><span id="t127" class="t" style="left:117.07px;top:815.00px;font-size:9.2px;line-height:11px;color:#333;transform:scaleX(1.0138);transform-origin:0 0;">Internal Medicine Rotation</span><span id="t128" class="t" style="left:117.08px;top:829.00px;font-size:9.2px;line-height:11px;color:#333;transform:scaleX(0.9879);transform-origin:0 0;">(Patient Logs, Timesheets)*</span><span id="t129" class="t" style="left:267.94px;top:822.00px;font-size:9.2px;line-height:11px;color:#9333ea;-webkit-text-stroke:0.08px currentColor;transform:scaleX(1.0259);transform-origin:0 0;">Forms/Evaluations</span><span id="t130" class="t" style="left:373.10px;top:816.00px;font-size:9.2px;line-height:11px;color:#9333ea;-webkit-text-stroke:0.08px currentColor;transform:translateX(-50%) scaleX(1.0565);transform-origin:center;">Patient</span><span id="t131" class="t" style="left:373.10px;top:828.00px;font-size:9.2px;line-height:11px;color:#9333ea;-webkit-text-stroke:0.08px currentColor;transform:translateX(-50%) scaleX(1.0154);transform-origin:center;">Log</span><span id="t132" class="t" style="left:399.94px;top:822.00px;font-size:9.2px;line-height:11px;color:#9333ea;-webkit-text-stroke:0.08px currentColor;transform:scaleX(1.0251);transform-origin:0 0;">Timesheet</span><span id="t133" class="t" style="left:465.60px;top:816.00px;font-size:9.2px;line-height:11px;color:#9333ea;-webkit-text-stroke:0.08px currentColor;transform:translateX(-50%) scaleX(1.0619);transform-origin:center;">Time</span><span id="t134" class="t" style="left:465.60px;top:828.00px;font-size:9.2px;line-height:11px;color:#9333ea;-webkit-text-stroke:0.08px currentColor;transform:translateX(-50%) scaleX(1.0176);transform-origin:center;">Off</span><span id="t135" class="t" style="left:496.44px;top:822.00px;font-size:9.2px;line-height:11px;color:#333;transform:scaleX(0.9447);transform-origin:0 0;">2024 - 2025</span><span id="t136" class="t" style="left:567.05px;top:815.00px;font-size:9.2px;line-height:11px;color:#333;transform:scaleX(1.0409);transform-origin:0 0;">Clinical</span><span id="t137" class="t" style="left:567.03px;top:829.00px;font-size:9.2px;line-height:11px;color:#333;transform:scaleX(1.0355);transform-origin:0 0;">Term</span><span id="t138" class="t" style="left:624.09px;top:815.00px;font-size:9.2px;line-height:11px;color:#333;transform:scaleX(0.9396);transform-origin:0 0;">Class of</span><span id="t139" class="t" style="left:624.03px;top:829.00px;font-size:9.2px;line-height:11px;color:#333;transform:scaleX(0.9995);transform-origin:0 0;">2025*</span><span id="t140" class="t" style="left:686.31px;top:822.00px;font-size:9.2px;line-height:11px;color:#333;">-</span><span id="t141" class="t" style="left:778.01px;top:822.00px;font-size:9.2px;line-height:11px;color:#333;">-</span><span id="t142" class="t" style="left:855.90px;top:816.00px;font-size:9.2px;line-height:11px;color:#9333ea;-webkit-text-stroke:0.08px currentColor;transform:translateX(-50%) scaleX(1.0321);transform-origin:center;">Set</span><span id="t143" class="t" style="left:855.90px;top:828.00px;font-size:9.2px;line-height:11px;color:#9333ea;-webkit-text-stroke:0.08px currentColor;transform:translateX(-50%) scaleX(1.1130);transform-origin:center;">up</span><span id="t144" class="t" style="left:873.54px;top:822.00px;font-size:9.2px;line-height:11px;color:#9333ea;-webkit-text-stroke:0.08px currentColor;transform:scaleX(1.0297);transform-origin:0 0;">Reports</span><div class="a" style="left:914.7px;top:673.3px;width:4.2999999999999545px;height:167.70000000000005px;background:#f1f1f1;"></div><div class="a" style="left:915.6px;top:675.5px;width:3.0px;height:83.79999999999995px;background:#a9a9a9;border-radius:1.5px;"></div><div class="a" style="left:256.5px;top:705.5px;width:102.0px;height:35.5px;border:2px solid #e01b24;box-sizing:border-box;"></div></div>
</body></html>
